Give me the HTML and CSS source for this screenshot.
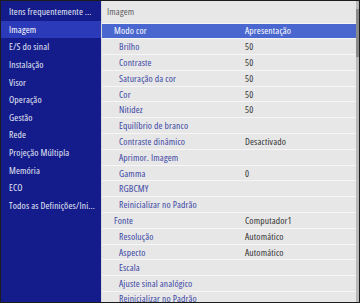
FILE: index.html
```html
<!DOCTYPE html>
<html lang="pt">
<head>
  <meta charset="UTF-8" />
  <title>Menu de configuração</title>
  <link rel="stylesheet" href="styles.css">
</head>
<body>
  <div class="frame">
    <nav class="side-menu">
      <div class="side-item">Itens frequentemente ...</div>
      <div class="side-item active">Imagem</div>
      <div class="side-item">E/S do sinal</div>
      <div class="side-item">Instalação</div>
      <div class="side-item">Visor</div>
      <div class="side-item">Operação</div>
      <div class="side-item">Gestão</div>
      <div class="side-item">Rede</div>
      <div class="side-item">Projeção Múltipla</div>
      <div class="side-item">Memória</div>
      <div class="side-item">ECO</div>
      <div class="side-item">Todos as Definições/Ini...</div>
    </nav>

    <section class="settings">
      <div class="settings-head">Imagem</div>
      <div class="row selected"><span class="label lvl1">Modo cor</span><span class="value">Apresentação</span></div>
      <div class="row"><span class="label lvl2">Brilho</span><span class="value">50</span></div>
      <div class="row"><span class="label lvl2">Contraste</span><span class="value">50</span></div>
      <div class="row"><span class="label lvl2">Saturação da cor</span><span class="value">50</span></div>
      <div class="row"><span class="label lvl2">Cor</span><span class="value">50</span></div>
      <div class="row"><span class="label lvl2">Nitidez</span><span class="value">50</span></div>
      <div class="row"><span class="label lvl2">Equilíbrio de branco</span><span class="value"></span></div>
      <div class="row"><span class="label lvl2">Contraste dinâmico</span><span class="value">Desactivado</span></div>
      <div class="row"><span class="label lvl2">Aprimor. Imagem</span><span class="value"></span></div>
      <div class="row"><span class="label lvl2">Gamma</span><span class="value">0</span></div>
      <div class="row"><span class="label lvl2">RGBCMY</span><span class="value"></span></div>
      <div class="row"><span class="label lvl2">Reinicializar no Padrão</span><span class="value"></span></div>
      <div class="row"><span class="label lvl1">Fonte</span><span class="value">Computador1</span></div>
      <div class="row"><span class="label lvl2">Resolução</span><span class="value">Automático</span></div>
      <div class="row"><span class="label lvl2">Aspecto</span><span class="value">Automático</span></div>
      <div class="row"><span class="label lvl2">Escala</span><span class="value"></span></div>
      <div class="row"><span class="label lvl2">Ajuste sinal analógico</span><span class="value"></span></div>
      <div class="row last"><span class="label lvl2">Reinicializar no Padrão</span><span class="value"></span></div>
    </section>

    <div class="scrollbar"><div class="thumb"></div></div>
  </div>
</body>
</html>
```

FILE: styles.css
```css
* {
  box-sizing: border-box;
}

body {
  margin: 0;
  background: #fff;
  font-family: "Open Sans", "Noto Sans", sans-serif;
  font-size: 9.5px;
  font-stretch: 75%;
  letter-spacing: 0.15px;
}

.frame {
  width: 360px;
  height: 303px;
  border: 1px solid #1c1c1c;
  display: flex;
  background: #d8d8d8;
  overflow: hidden;
}

.side-menu {
  width: 100px;
  flex-shrink: 0;
  background: #131c8a;
  padding-top: 2px;
  margin-right: 1px;
  overflow: hidden;
}

.side-item {
  height: 17.65px;
  line-height: 17.65px;
  padding-left: 8px;
  color: #e6e8f6;
  white-space: nowrap;
  overflow: hidden;
}

.side-item.active {
  background: #2a3ab8;
  color: #fff;
}

.settings {
  flex: 1;
  background: #e7e7e7;
  overflow: hidden;
}

.settings-head {
  height: 21.5px;
  line-height: 22px;
  padding-left: 5px;
  color: #5c5c5c;
}

.row {
  height: 15.8px;
  border-top: 1px solid #f6f6f6;
  display: flex;
  align-items: center;
  color: #3a46a4;
}

.row.last {
  align-items: flex-start;
  line-height: 13px;
}

.row.selected {
  background: #4a66cf;
  color: #fff;
}

.label {
  width: 143px;
  flex-shrink: 0;
  white-space: nowrap;
}

.lvl1 {
  padding-left: 12px;
}

.lvl2 {
  padding-left: 17px;
}

.value {
  color: #333;
}

.row.selected .value {
  color: #fff;
}

.scrollbar {
  width: 3px;
  flex-shrink: 0;
  background: #b9b9b9;
}

.thumb {
  height: 48px;
  margin-top: 8px;
  background: #8a8a8a;
}
```
